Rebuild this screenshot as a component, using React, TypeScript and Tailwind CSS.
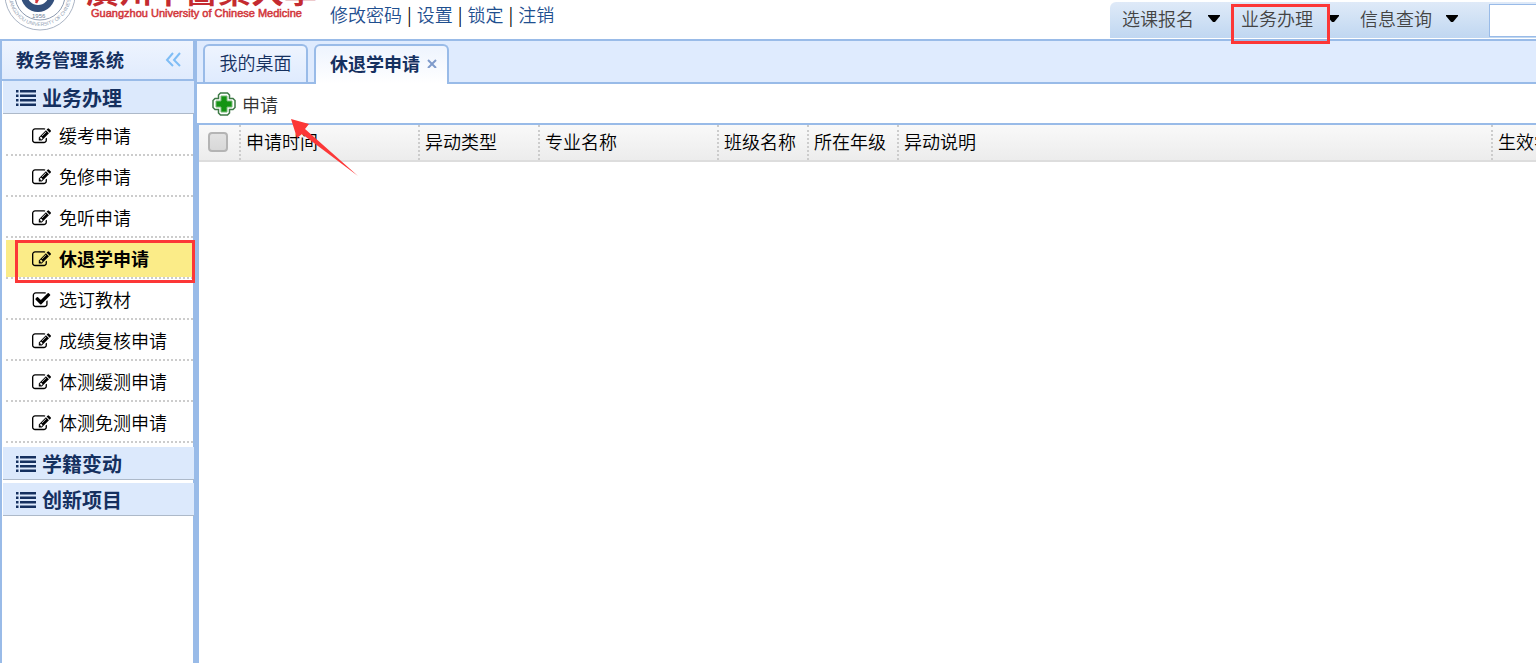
import { useState } from "react";

type MenuItem = { label: string; icon: "edit" | "check" };

const MENU_ITEMS: MenuItem[] = [
    { label: "缓考申请", icon: "edit" },
    { label: "免修申请", icon: "edit" },
    { label: "免听申请", icon: "edit" },
    { label: "休退学申请", icon: "edit" },
    { label: "选订教材", icon: "check" },
    { label: "成绩复核申请", icon: "edit" },
    { label: "体测缓测申请", icon: "edit" },
    { label: "体测免测申请", icon: "edit" },
];

const COLUMNS = [
    { label: "申请时间", width: "w-[179px]" },
    { label: "异动类型", width: "w-[120px]" },
    { label: "专业名称", width: "w-[179px]" },
    { label: "班级名称", width: "w-[90px]" },
    { label: "所在年级", width: "w-[90px]" },
    { label: "异动说明", width: "w-[594px]" },
    { label: "生效学期", width: "w-[120px]" },
];

const ACCOUNT_LINKS = ["修改密码", "设置", "锁定", "注销"];
const TOP_MENUS = ["选课报名", "业务办理", "信息查询"];

function EditIcon() {
    return (
        <svg viewBox="0 -180 1792 1792" className="size-[19px] shrink-0 fill-current" aria-hidden="true">
            <path d="M888 1184l116-116-152-152-116 116v56h96v96h56zm440-720q-16-16-33 1l-350 350q-17 17-1 33t33-1l350-350q17-17 1-33zm80 594v190q0 119-84.5 203.5t-203.5 84.5h-832q-119 0-203.5-84.5t-84.5-203.5v-832q0-119 84.5-203.5t203.5-84.5h832q63 0 117 25 15 7 18 23 3 17-9 29l-49 49q-14 14-32 8-23-6-45-6h-832q-66 0-113 47t-47 113v832q0 66 47 113t113 47h832q66 0 113-47t47-113v-126q0-13 9-22l64-64q15-15 35-7t20 29zm-96-738l288 288-672 672h-288v-288zm444 132l-92 92-288-288 92-92q28-28 68-28t68 28l152 152q28 28 28 68t-28 68z" />
        </svg>
    );
}

function CheckIcon() {
    return (
        <svg viewBox="0 -180 1792 1792" className="size-[19px] shrink-0 fill-current" aria-hidden="true">
            <path d="M1472 930v318q0 119-84.5 203.5t-203.5 84.5h-832q-119 0-203.5-84.5t-84.5-203.5v-832q0-119 84.5-203.5t203.5-84.5h832q63 0 117 25 15 7 18 23 3 17-9 29l-49 49q-10 10-23 10-3 0-9-2-23-6-45-6h-832q-66 0-113 47t-47 113v832q0 66 47 113t113 47h832q66 0 113-47t47-113v-254q0-13 9-22l64-64q10-10 23-10 6 0 12 3 20 8 20 29zm231-489l-814 814q-24 24-57 24t-57-24l-430-430q-24-24-24-57t24-57l110-110q24-24 57-24t57 24l263 263 647-647q24-24 57-24t57 24l110 110q24 24 24 57t-24 57z" />
        </svg>
    );
}

function ListIcon() {
    return (
        <svg viewBox="0 0 20 16" className="h-4 w-5 shrink-0 fill-current" aria-hidden="true">
            {[0, 4.5, 9, 13.5].map((y) => (
                <g key={y}>
                    <rect x="0" y={y} width="2.500" height="2.500" />
                    <rect x="4" y={y} width="16" height="2.500" />
                </g>
            ))}
        </svg>
    );
}

function PlusIcon() {
    return (
        <svg viewBox="0 0 24 24" className="size-6 shrink-0" aria-hidden="true">
            <path
                d="M8.500 1h7L17.500 3v3.500H21L23 8.500v7L21 17.500h-3.500V21l-2 2h-7l-2-2v-3.500H3l-2-2v-7l2-2h3.500V3z"
                fill="#fff"
                stroke="#3d7a45"
                strokeWidth="1.5"
            />
            <path d="M9 4h6v5h5v6h-5v5H9v-5H4V9h5z" fill="#149414" stroke="#77b877" />
        </svg>
    );
}

function Caret() {
    return (
        <svg viewBox="0 0 14 7" className="h-[7px] w-[14px] shrink-0" aria-hidden="true">
            <path d="M1 0h12v1L8 7H6L1 1z" />
        </svg>
    );
}

function Logo() {
    return (
        <div className="flex h-full w-[330px] shrink-0 items-end overflow-hidden">
            <svg viewBox="0 0 320 40" className="h-10 w-80" role="img" aria-label="廣州中醫藥大學">
                <defs>
                    <path id="seal" d="M9 -4a31 31 0 0 0 62 0" />
                </defs>
                <circle cx="40" cy="-4" r="35" fill="#fff" stroke="#aab4c4" strokeWidth="1" />
                <circle cx="40" cy="-4" r="25" fill="none" stroke="#8d9bb0" strokeWidth="1" />
                <circle cx="38" cy="-4" r="17" fill="#34507c" />
                <circle cx="38" cy="-5" r="11" fill="#fff" />
                <path d="M40 -4l-4 8M35 1l6-3" stroke="#d4373c" strokeWidth="2.5" />
                <text fontSize="5" fill="#8d9bb0" fontFamily="Liberation Sans, sans-serif">
                    <textPath href="#seal">GUANGZHOU UNIVERSITY OF CHINESE</textPath>
                </text>
                <text x="32" y="19" fontSize="6" fill="#6e7f98" fontFamily="Liberation Sans, sans-serif">
                    1956
                </text>
                <text x="86" y="4" fontSize="33" fontWeight="700" fill="#c42b30" fontFamily="Noto Sans CJK TC, sans-serif">
                    廣州中醫藥大學
                </text>
                <text
                    x="91"
                    y="18"
                    fontSize="11"
                    fill="#d2363b"
                    stroke="#d2363b"
                    strokeWidth="0.5"
                    fontFamily="Liberation Sans, sans-serif"
                >
                    Guangzhou University of Chinese Medicine
                </text>
            </svg>
        </div>
    );
}

function Header() {
    return (
        <header className="relative z-10 flex h-[39px] shrink-0">
            <Logo />
            <nav className="flex h-7 items-center gap-[5px] whitespace-nowrap text-black">
                {ACCOUNT_LINKS.map((label, i) => (
                    <span key={label} className="flex gap-[5px]">
                        {i > 0 && <span>|</span>}
                        <a href="#" className="text-[#1f4f8f]">{label}</a>
                    </span>
                ))}
            </nav>
            <div className="mt-[2px] ml-auto flex h-9 items-center rounded-tl-md bg-linear-to-b from-[#dfeaf8] to-[#c0d7f1] pl-3">
                {TOP_MENUS.map((label) => (
                    <button key={label} className="relative flex h-9 w-[119px] items-center gap-[13px] pb-1 whitespace-nowrap text-black">
                        <span className="text-[#444]">{label}</span>
                        <Caret />
                        {label === "业务办理" && (
                            <span className="absolute top-[2px] -left-[10px] h-10 w-[99px] border-3 border-[#fc3737]" />
                        )}
                    </button>
                ))}
                <input aria-label="搜索" className="ml-[10px] h-[33px] w-[47px] border border-r-0 border-[#99bbe8] bg-white" />
            </div>
        </header>
    );
}

function SectionTitle({ label }: { label: string }) {
    return (
        <button className="-mr-px ml-px flex h-[33px] shrink-0 items-center gap-[6px] border-b border-[#adb9c9] bg-[#dce9fc] pt-[2px] pl-[13px] text-[20px] leading-7 font-bold text-[#15305f]">
            <ListIcon />
            {label}
        </button>
    );
}

function Sidebar() {
    const [active, setActive] = useState("休退学申请");

    return (
        <aside className="relative flex w-[197px] shrink-0 flex-col border-r-4 border-l-2 border-[#99bbe8]">
            <div className="flex h-10 shrink-0 items-center justify-between border-b-2 border-[#99bbe8] bg-linear-to-b from-[#eef4fe] to-[#e0ebfd] pr-3 pb-[2px] pl-[14px] font-bold text-[#15305f]">
                教务管理系统
                <button aria-label="收起">
                    <svg viewBox="0 0 16 16" className="size-4 fill-none stroke-[#7fbdf5] stroke-2" aria-hidden="true">
                        <path d="M8 2L2 9l6 6M15 2L9 9l6 6" />
                    </svg>
                </button>
            </div>
            <SectionTitle label="业务办理" />
            <ul className="mb-1 pt-[1px] pl-1">
                {MENU_ITEMS.map((item) => (
                    <li key={item.label} className="relative h-[41px] border-b-2 border-dotted border-[#ccc] pt-[2px]">
                        <button
                            onClick={() => setActive(item.label)}
                            className={`flex h-[37px] w-full items-center gap-2 pb-[2px] pl-[26px] whitespace-nowrap text-black ${
                                active === item.label ? "bg-[#fbec88] font-bold" : ""
                            }`}
                        >
                            {item.icon === "edit" ? <EditIcon /> : <CheckIcon />}
                            {item.label}
                        </button>
                        {item.label === "休退学申请" && (
                            <span className="pointer-events-none absolute top-[2px] left-[9px] z-10 h-[43px] w-[180px] border-3 border-[#fc3737]" />
                        )}
                    </li>
                ))}
            </ul>
            <div className="flex flex-col gap-[3px]">
                <SectionTitle label="学籍变动" />
                <SectionTitle label="创新项目" />
            </div>
        </aside>
    );
}

function Tabs() {
    return (
        <div className="flex h-[43px] shrink-0 items-end gap-[6px] border-b-2 border-[#99bbe8] bg-[#dfebfe] pl-[6px]" role="tablist">
            <button role="tab" aria-selected="false" className="h-[38px] w-[105px] rounded-t-md border-2 border-b-0 border-[#99bbe8] bg-linear-to-b from-[#eef4fe] to-[#dfebfe] pb-1 text-[#15305f]">
                我的桌面
            </button>
            <button role="tab" aria-selected="true" className="-mb-[2px] flex h-10 w-[135px] items-center gap-[7px] rounded-t-md border-2 border-b-0 border-[#99bbe8] bg-linear-to-b from-[#eef4fe] to-white pb-1 pl-[14px] font-bold whitespace-nowrap text-[#15305f]">
                休退学申请
                <svg viewBox="0 0 10 10" className="size-[10px] stroke-[#7f9bcb] stroke-2" aria-hidden="true">
                    <path d="M1 2l8 8M9 2L1 10" />
                </svg>
            </button>
        </div>
    );
}

function ApplicationGrid() {
    return (
        <div className="min-h-0 flex-1 overflow-hidden border-l-2 border-[#99bbe8]">
            <table className="w-[1413px] table-fixed border-collapse text-left">
                <thead className="bg-linear-to-b from-[#f9f9f9] to-[#ececec]">
                    <tr className="h-9 border-b-2 border-[#ddd]">
                        <th className="w-[41px] pb-[2px] pl-[9px] align-middle">
                            <input type="checkbox" aria-label="全选" className="block size-5 appearance-none rounded-sm border-2 border-[#b4b4b4] bg-linear-to-b from-[#e2e2e2] to-[#d8d8d8]" />
                        </th>
                        {COLUMNS.map((col) => (
                            <th key={col.label} className={`${col.width} border-l-2 border-dotted border-l-[#ccc] pb-1 pl-[5px] font-[350] whitespace-nowrap text-black`}>
                                {col.label}
                            </th>
                        ))}
                    </tr>
                </thead>
            </table>
        </div>
    );
}

export default function App() {
    return (
        <div className="flex h-screen flex-col overflow-hidden bg-white font-['Noto_Sans_CJK_SC','Liberation_Sans',sans-serif] text-[18px] leading-6 font-[350]">
            <Header />
            <div className="flex min-h-0 flex-1 border-t-2 border-[#99bbe8]">
                <Sidebar />
                <main className="relative flex min-w-0 flex-1 flex-col">
                    <Tabs />
                    <div className="flex h-[41px] shrink-0 items-center border-b-2 border-[#99bbe8] pl-[15px]">
                        <button className="flex items-center gap-[6px] text-[#333]">
                            <PlusIcon />
                            申请
                        </button>
                    </div>
                    <ApplicationGrid />
                    {/* pointer to the apply button */}
                    <svg viewBox="0 0 68 58" className="pointer-events-none absolute top-[78px] left-[94px] h-[58px] w-[68px] fill-[#fc3737]" aria-hidden="true">
                        <path d="M0 0l18 5-4 5 53 47L11 15l-5 4z" />
                    </svg>
                </main>
            </div>
        </div>
    );
}
